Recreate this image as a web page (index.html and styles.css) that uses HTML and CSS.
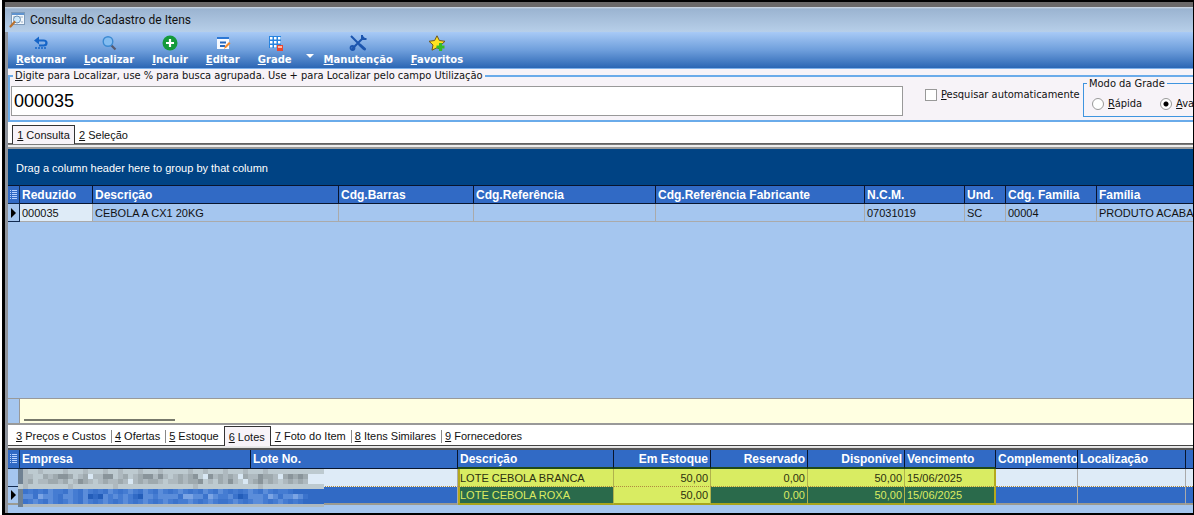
FILE: index.html
```html
<!DOCTYPE html>
<html lang="pt-BR">
<head>
<meta charset="utf-8">
<title>Consulta do Cadastro de Itens</title>
<link rel="stylesheet" href="styles.css">
</head>
<body>
<main class="window">
  <header class="titlebar">
    <svg width="16" height="16" viewBox="0 0 16 16"><rect x="2.5" y=".5" width="13" height="12" fill="#f4f8fc" stroke="#7e9ab8"/><path d="M3 1h12v2H3z" fill="#5f93cf"/><path d="M4 5h3M11 5h3M4 8h2M12 10h2" stroke="#9db2c8"/><circle cx="8" cy="7.500" r="3.500" fill="#c9e6fa" stroke="#6b8eb0"/><path d="M5.500 10 1.500 14.500" stroke="#b9722e" stroke-width="2.200" stroke-linecap="round"/></svg>
    <h1>Consulta do Cadastro de Itens</h1>
  </header>
  <nav class="toolbar">
    <button type="button"><svg width="16" height="16" viewBox="0 0 16 16"><path d="M4 5.500h6.500q3 0 3 2.500t-3 2.500H6" fill="none" stroke="#1565c8" stroke-width="2.200"/><path d="M6 1.500v8L1 5.500z" fill="#1565c8"/><path d="M2 13h11" stroke="#1565c8" stroke-width="1.500" stroke-dasharray="2 1"/></svg><span><u>R</u>etornar</span></button>
    <button type="button"><svg width="16" height="16" viewBox="0 0 16 16"><path d="m10 10 4.500 4.500" stroke="#565b72" stroke-width="2.200"/><circle cx="7" cy="6.500" r="4.800" fill="#84bdf1" stroke="#3c8ad2" stroke-width="1.400"/></svg><span><u>L</u>ocalizar</span></button>
    <button type="button"><svg width="16" height="16" viewBox="0 0 16 16"><circle cx="8" cy="8" r="7.500" fill="#159a3a"/><path d="M8 4v8M4 8h8" stroke="#fff" stroke-width="2.200"/></svg><span><u>I</u>ncluir</span></button>
    <button type="button"><svg width="16" height="16" viewBox="0 0 16 16"><path d="M2 2h12v12H2z" fill="#f6f9ff"/><path d="M2 2h12v2H2z" fill="#2d77d4"/><path d="M5 7.500h6M5 11h5" stroke="#2767bd" stroke-width="2"/><path d="m9 14 1-3 4-4 1.500 1.500-4 4z" fill="#f58a2d"/></svg><span><u>E</u>ditar</span></button>
    <button type="button"><svg width="16" height="16" viewBox="0 0 16 16"><path d="M2 1h12v12H2z" fill="#2783df"/><path d="M3 2h2.500v2.500H3zm4 0h2.500v2.500H7zm4 0h2.500v2.500H11zM3 6h2.500v2.500H3zm4 0h2.500v2.500H7zm4 0h2.500v2.500H11zM3 10h2.500v2.500H3zm4 0h2.500v2.500H7z" fill="#fff"/><path d="M10 10h6v6h-6z" fill="#e9472f"/><path d="M11 11h4v2h-4z" fill="#ffb7a4"/></svg><span><u>G</u>rade</span></button>
    <button type="button" class="arrow" aria-label="Mais opções"></button>
    <button type="button"><svg width="18" height="16" viewBox="0 0 18 16"><path d="m2 1 13 13M15 2 3 14" stroke="#1c55ae" stroke-width="2"/><path d="m11 10 4.500 4" stroke="#1c55ae" stroke-width="3" stroke-linecap="round"/><path d="M13 0v4h4.500" fill="none" stroke="#1c55ae" stroke-width="2"/><circle cx="3.500" cy="13" r="2" fill="none" stroke="#1c55ae" stroke-width="1.800"/></svg><span><u>M</u>anutenção</span></button>
    <button type="button"><svg width="18" height="16" viewBox="0 0 18 16"><path d="m9 .8 2.400 4.700 5.600.8-4 3.700.8 5.200L9 12.700l-5 2.500L5 10 1 6.300l5.600-.8z" fill="#ffe21f" stroke="#6d5420"/><path d="M12.500 8v8M8.500 12h8" stroke="#36bb25" stroke-width="3"/></svg><span><u>F</u>avoritos</span></button>
  </nav>
  <div class="search-band">
    <fieldset class="search">
      <legend><label for="busca"><u>D</u>igite para Localizar, use % para busca agrupada. Use + para Localizar pelo campo Utilização</label></legend>
      <div class="search-row">
        <input id="busca" type="text" value="000035">
        <label class="check"><input type="checkbox"><span><u>P</u>esquisar automaticamente</span></label>
        <fieldset class="mode">
          <legend>Modo da Grade</legend>
          <div class="radios">
            <label><input type="radio" name="modo"><span><u>R</u>ápida</span></label>
            <label><input type="radio" name="modo" checked><span><u>A</u>va</span></label>
          </div>
        </fieldset>
      </div>
    </fieldset>
  </div>
  <div class="tabs top-tabs" role="tablist">
    <button type="button" role="tab" class="active" aria-selected="true"><u>1</u> Consulta</button>
    <button type="button" role="tab"><u>2</u> Seleção</button>
  </div>
  <section class="grid main-grid">
    <p class="group-hint">Drag a column header here to group by that column</p>
    <table>
      <colgroup><col class="w-mark"><col class="w73"><col class="w246"><col class="w135"><col class="w182"><col class="w209"><col class="w100"><col class="w41"><col class="w91"><col></colgroup>
      <thead><tr><th class="mark"><svg width="10" height="12" viewBox="0 0 10 12"><path d="M1 1.500h1m1 0h5M1 3.500h1m1 0h5M1 5.500h1m1 0h5M1 7.500h1m1 0h5M1 9.500h1m1 0h5" stroke="#b8d2ff"/></svg></th><th>Reduzido</th><th>Descrição</th><th>Cdg.Barras</th><th>Cdg.Referência</th><th>Cdg.Referência Fabricante</th><th>N.C.M.</th><th>Und.</th><th>Cdg. Família</th><th>Família</th></tr></thead>
      <tbody><tr><td class="mark current"></td><td class="focus">000035</td><td>CEBOLA A CX1 20KG</td><td></td><td></td><td></td><td>07031019</td><td>SC</td><td>00004</td><td>PRODUTO ACABA</td></tr></tbody>
    </table>
  </section>
  <div class="note"><div class="note-line"></div></div>
  <div class="tabs low-tabs" role="tablist">
    <button type="button" role="tab"><u>3</u> Preços e Custos</button>
    <button type="button" role="tab"><u>4</u> Ofertas</button>
    <button type="button" role="tab"><u>5</u> Estoque</button>
    <button type="button" role="tab" class="active" aria-selected="true"><u>6</u> Lotes</button>
    <button type="button" role="tab"><u>7</u> Foto do Item</button>
    <button type="button" role="tab"><u>8</u> Itens Similares</button>
    <button type="button" role="tab"><u>9</u> Fornecedores</button>
  </div>
  <section class="grid lots">
    <table>
      <colgroup><col class="w-mark"><col class="w231"><col class="w207"><col class="w156"><col class="w97"><col class="w97"><col class="w97"><col class="w91"><col class="w82"><col class="w108"><col></colgroup>
      <thead><tr><th class="mark"><svg width="10" height="12" viewBox="0 0 10 12"><path d="M1 1.500h1m1 0h5M1 3.500h1m1 0h5M1 5.500h1m1 0h5M1 7.500h1m1 0h5M1 9.500h1m1 0h5" stroke="#b8d2ff"/></svg></th><th>Empresa</th><th>Lote No.</th><th class="hl">Descrição</th><th class="hl num">Em Estoque</th><th class="hl num">Reservado</th><th class="hl num">Disponível</th><th class="hl">Vencimento</th><th>Complemento</th><th>Localização</th><th></th></tr></thead>
      <tbody>
        <tr class="pale"><td class="mark"></td><td></td><td></td><td class="hl first">LOTE CEBOLA BRANCA</td><td class="hl num">50,00</td><td class="hl num">0,00</td><td class="hl num">50,00</td><td class="hl last">15/06/2025</td><td></td><td></td><td></td></tr>
        <tr class="selected"><td class="mark current"></td><td></td><td></td><td class="hl first">LOTE CEBOLA ROXA</td><td class="hl num edit">50,00</td><td class="hl num">0,00</td><td class="hl num">50,00</td><td class="hl last">15/06/2025</td><td></td><td></td><td></td></tr>
      </tbody>
    </table>
    <svg class="mosaic" width="306" height="38" shape-rendering="crispEdges" aria-hidden="true"></svg>
  </section>
</main>
<script src="mosaic.js"></script>
</body>
</html>
```

FILE: styles.css
```css
* { box-sizing: border-box; }
body { margin: 0; padding-left: 2px; background: #fff; color: #111; font: 11px/14px "Liberation Sans", sans-serif; }
button { font: inherit; color: inherit; border: 0; background: none; padding: 0; white-space: nowrap; }
fieldset { margin: 0; padding: 0; min-width: 0; }
u { text-underline-offset: 1px; }

.window { display: flex; flex-direction: column; height: 100vh; overflow: hidden; background: #a5c6ef; border: 2px solid #000; border-width: 2px 1px 2px 3px; box-shadow: inset 3px 0 #8f949c; padding-left: 3px; }
.titlebar { flex: none; display: flex; align-items: center; gap: 5px; height: 30px; margin-left: -3px; padding: 0 0 0 4px; border-top: 5px solid #6b6969; background: linear-gradient(#d5dde6 0, #9bb4d1 2px, #b7cfe9); }
.titlebar h1 { margin: 0; font: 12px/16px Roboto, sans-serif; color: #111; }

.toolbar { flex: none; display: flex; align-items: flex-start; gap: 18px; height: 37px; padding: 3px 0 0 8px; background: linear-gradient(#a8caf6, #6f9fdc 50%, #2b66b4); border-bottom: 1px solid #7db0ea; }
.toolbar button { display: flex; flex-direction: column; align-items: center; color: #fff; font: bold 10px/13px "DejaVu Sans", sans-serif; gap: 2px; }
.toolbar .arrow { width: 0; height: 0; border: 4px solid transparent; border-top-color: #fff; border-bottom: 0; margin: 19px -8px 0 -4px; }

.search-band { flex: none; background: #f7f3f8; }
.search { height: 53px; border: 2px solid #6aabea; border-right: 0; font: 11px/13px "DejaVu Sans Condensed", "DejaVu Sans", sans-serif; }
.search > legend { margin-left: 3px; padding: 0 2px; }
.search-row { display: flex; align-items: flex-start; padding: 4px 0 0 1px; }
.search-row > input { flex: 1; min-width: 0; height: 30px; border: 1px solid #999; padding: 0 2px; font: 18px/26px "Liberation Sans", sans-serif; background: #fff; color: #000; }
.check, .radios label { display: flex; align-items: center; gap: 4px; white-space: nowrap; }
.check { width: 180px; padding: 2px 0 0 22px; }
.check input, .radios input { appearance: none; width: 12px; height: 12px; margin: 0; border: 1px solid #999; background: #fff; }
.radios input { border-radius: 50%; }
.radios input:checked { background: radial-gradient(circle, #000 2px, #fff 3px); }
.mode { flex: none; width: 110px; height: 40px; margin-top: -9px; border: 1px solid #3f94df; border-right: 0; overflow: hidden; }
.mode legend { margin-left: 3px; padding: 0 2px; }
.radios { display: flex; gap: 18px; padding: 7px 0 0 8px; }

.tabs { flex: none; display: flex; background: #fff; }
.tabs button { line-height: 14px; }
.tabs .active { background: #f7f3f8; border: 1px solid #333; border-bottom: 0; }
.top-tabs { height: 27px; padding: 3px 0 0 4px; background: linear-gradient(#fff 21px, #555 21px, #888 23px, #eee 23px, #eee 25px, #999 25px); }
.top-tabs button { height: 19px; padding: 0 4px; }
.top-tabs .active { width: 63px; }
.low-tabs { height: 25px; padding: 1px 0 0 4px; background: linear-gradient(#fff 20px, #444 20px, #444 21px, #eee 21px, #ddd 23px, #555 23px); }
.low-tabs button { height: 20px; padding: 0 5px 0 4px; }
.low-tabs button + button:not(.active) { background: linear-gradient(#888, #888) 0 4px / 1px 13px no-repeat; }
.low-tabs .active + button:not(.active) { background: none; }

.grid { flex: none; }
.main-grid { flex: 1; min-height: 0; }
.group-hint { margin: 0; height: 36px; padding: 12px 8px 0; line-height: 14px; color: #fff; background: #004384; }
table { width: 100%; table-layout: fixed; border-collapse: separate; border-spacing: 0; line-height: 14px; }
th, td { height: 18px; padding: 0 2px; text-align: left; white-space: nowrap; overflow: hidden; border-right: 1px solid #aaa; border-bottom: 1px solid #aaa; }
th { font-size: 12px; color: #fff; background: #316ac5; border-color: #08152e; padding-right: 0; }
thead th { height: 19px; }
.main-grid th { border-top: 1px solid #08152e; }
th:last-child, td:last-child { border-right: 0; }
.num { text-align: right; padding-right: 2px; }
.mark, td.mark { padding: 0; border-color: #122b50; vertical-align: middle; }
.mark svg { display: block; margin: auto; }
.current::after { content: ""; display: block; width: 0; margin-left: 3px; border: 5px solid transparent; border-left-color: #000; border-right: 0; }
.focus, .pale td:not(.mark) { background: #deebf7; }
.w-mark { width: 12px; } .w41 { width: 41px; } .w73 { width: 73px; } .w82 { width: 82px; } .w91 { width: 91px; } .w97 { width: 97px; } .w100 { width: 100px; } .w108 { width: 108px; } .w135 { width: 135px; } .w156 { width: 156px; } .w182 { width: 182px; } .w207 { width: 207px; } .w209 { width: 209px; } .w231 { width: 231px; } .w246 { width: 246px; }

.note { flex: none; height: 27px; border: 2px solid #999; border-width: 1px 0 2px; padding: 20px 0 0 16px; background: linear-gradient(90deg, #a5c6ef 11px, #999 11px, #999 12px, #ffffe1 12px); }
.note-line { width: 151px; height: 2px; background: #77796b; }

.lots { position: relative; padding-bottom: 8px; }
.lots th.hl { border-bottom: 2px solid #1f4a18; }
.lots td.hl { color: #2c3010; border-right-color: #b0b24c; }
.lots .selected td { border-bottom: 2px solid #9b9b92; }
.lots .selected td:not(.mark) { background-color: #316ac5; }
.lots .pale td:not(.mark) { border-bottom: 1px dotted #b08a40; }
.lots .selected td.hl:not(.mark) { background: #2a6a4b; color: #dcea62; border-bottom-color: #a9a51c; }
.lots .selected td.edit:not(.mark) { background: #d9ec62; color: #2c3010; }
.lots .pale td.hl:not(.mark) { background: #d9ec62; }
.lots td.last { border-right: 2px solid #b5a91c; }
.lots td.first { box-shadow: inset 2px 0 #b5a91c; }
.mosaic { position: absolute; left: 10px; top: 19px; }
```

FILE: mosaic.js
```js
// Pixel mosaic that hides the company and lot values; one letter per 5px cell.
const palette = {
  a: "#bdcad0", b: "#aeb9bf", c: "#9ea9ae", d: "#89949a", e: "#d9e8f4", w: "#deebf7", k: "#6f8192",
  0: "#316ac5", 1: "#3b73cc", 2: "#457cd2", 3: "#5b8dda", 4: "#7ba4e4", 5: "#235db9"
};
const rows = [
  "kbaabaaaabaaabaaabaabaaabaaabaaaaabaabaaabaaabaaabaaaaaaaaaaaa",
  "kbbaacbcddcabcebbddabcabcddbdbabcbcdaedbcbcbecbbdccbecdcdcwwww",
  "kbcabbccbcabdcbabcbbcbebcbccbabbcbccdabacbdbaebcdbcbabcbcbwwww",
  "abaaaaaaaabaaaaaaaabaaaaaaaaaaaaaaabaaaaaaaaaaaabaaaaaaaaaaaaa",
  "k1212132213213212132123213213212321213213212123213212210000000",
  "k3314332133213505323232053323333144331432231503332431334310000",
  "k1232132123213212321232123212321223212321123212332123212100000",
  "kbbbbbbbbbbbbbbbbbbbbbbbbbbbbbbbbbbbbbbbbbbbbbbbbbbbbbbbbbbbbb"
];
const svg = document.querySelector(".mosaic");
rows.forEach((row, y) => [...row].forEach((key, x) => {
  const cell = document.createElementNS("http://www.w3.org/2000/svg", "rect");
  cell.setAttribute("x", x * 5);
  cell.setAttribute("y", y * 5);
  cell.setAttribute("width", 5);
  cell.setAttribute("height", 5);
  cell.setAttribute("fill", palette[key]);
  svg.append(cell);
}));
```
